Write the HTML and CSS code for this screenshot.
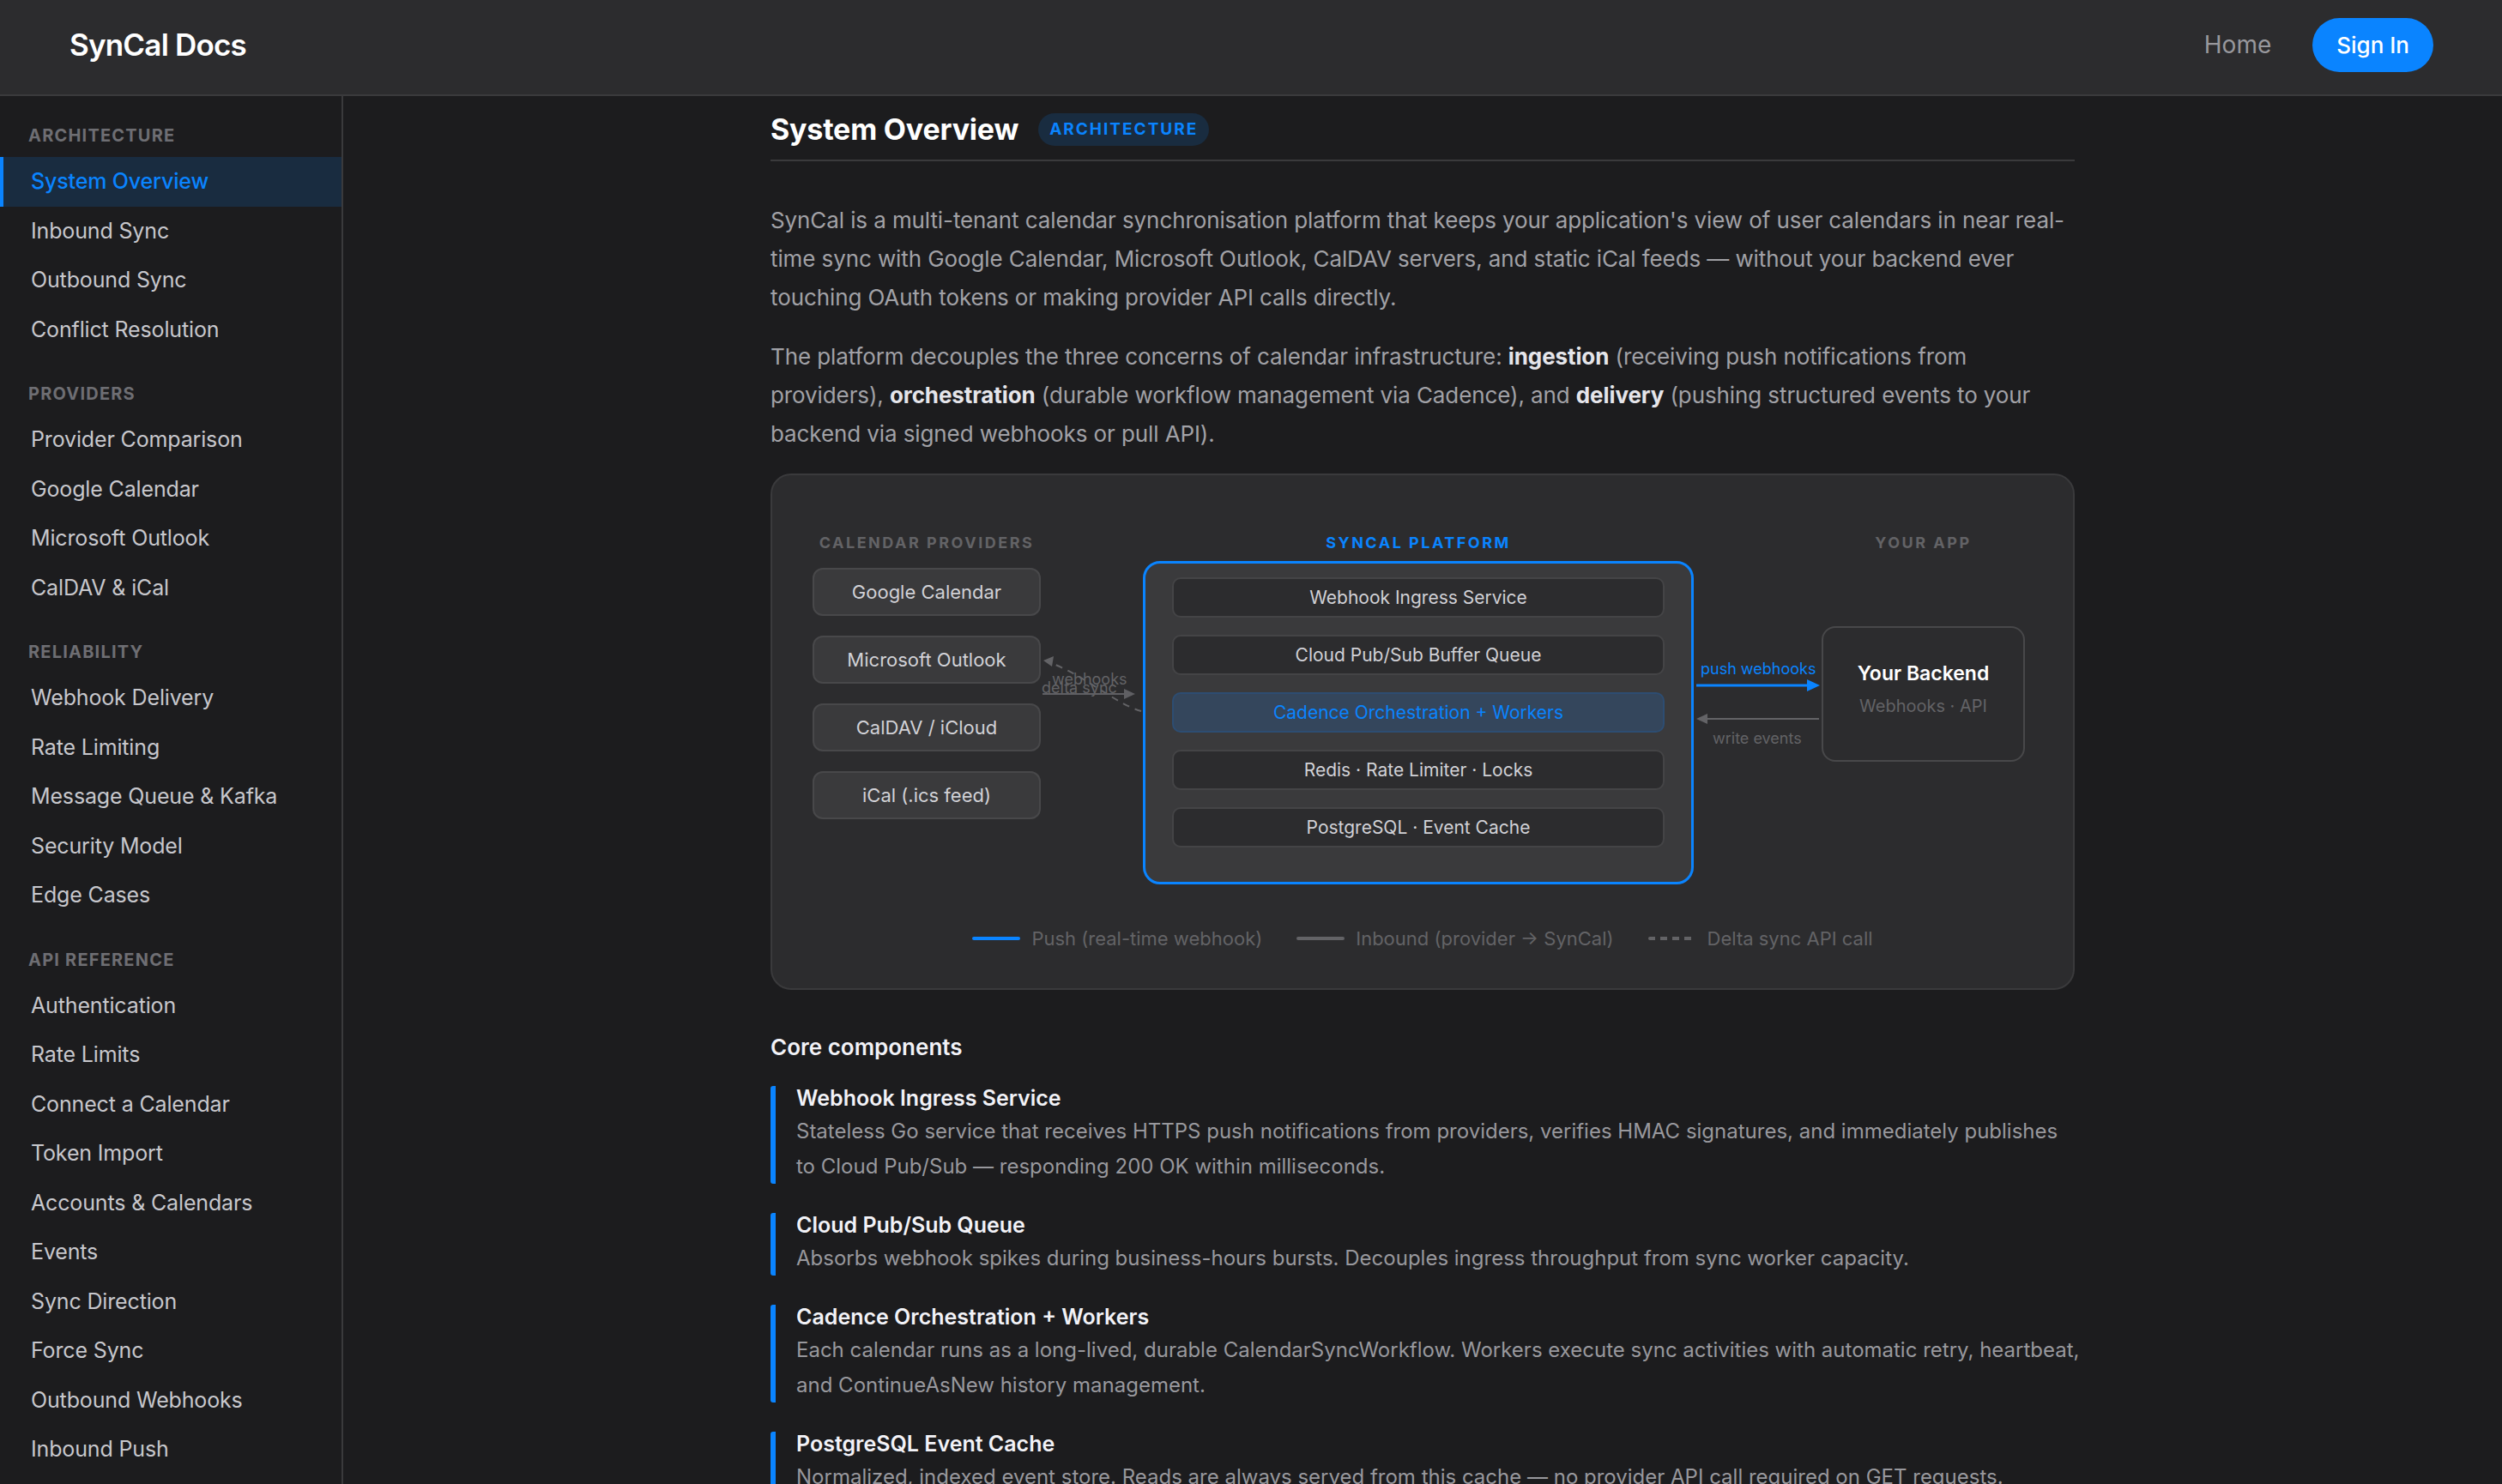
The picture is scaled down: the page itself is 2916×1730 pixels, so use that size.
FILE: index.html
```html
<!doctype html>
<html lang="en">
<head>
	<meta charset="UTF-8">
	<title>System Overview · SynCal Docs</title>
	<link rel="stylesheet" href="styles.css">
</head>
<body>
	<header class="topbar">
		<div class="brand">SynCal Docs</div>
		<nav class="top-links">
			<a class="top-link" href="#">Home</a>
			<a class="btn-signin" href="#">Sign In</a>
		</nav>
	</header>

	<div class="layout">
		<aside class="sidebar">
			<div class="nav-group">
				<div class="nav-label">Architecture</div>
				<a class="nav-item active" href="#">System Overview</a>
				<a class="nav-item" href="#">Inbound Sync</a>
				<a class="nav-item" href="#">Outbound Sync</a>
				<a class="nav-item" href="#">Conflict Resolution</a>
			</div>
			<div class="nav-group">
				<div class="nav-label">Providers</div>
				<a class="nav-item" href="#">Provider Comparison</a>
				<a class="nav-item" href="#">Google Calendar</a>
				<a class="nav-item" href="#">Microsoft Outlook</a>
				<a class="nav-item" href="#">CalDAV &amp; iCal</a>
			</div>
			<div class="nav-group">
				<div class="nav-label">Reliability</div>
				<a class="nav-item" href="#">Webhook Delivery</a>
				<a class="nav-item" href="#">Rate Limiting</a>
				<a class="nav-item" href="#">Message Queue &amp; Kafka</a>
				<a class="nav-item" href="#">Security Model</a>
				<a class="nav-item" href="#">Edge Cases</a>
			</div>
			<div class="nav-group">
				<div class="nav-label">API Reference</div>
				<a class="nav-item" href="#">Authentication</a>
				<a class="nav-item" href="#">Rate Limits</a>
				<a class="nav-item" href="#">Connect a Calendar</a>
				<a class="nav-item" href="#">Token Import</a>
				<a class="nav-item" href="#">Accounts &amp; Calendars</a>
				<a class="nav-item" href="#">Events</a>
				<a class="nav-item" href="#">Sync Direction</a>
				<a class="nav-item" href="#">Force Sync</a>
				<a class="nav-item" href="#">Outbound Webhooks</a>
				<a class="nav-item" href="#">Inbound Push</a>
			</div>
		</aside>

		<main class="main">
			<article class="doc">
				<div class="doc-head">
					<h1 class="doc-title">System Overview</h1>
					<span class="badge">Architecture</span>
				</div>

				<p class="prose">SynCal is a multi-tenant calendar synchronisation platform that keeps your application's view of user calendars in near real-time sync with Google Calendar, Microsoft Outlook, CalDAV servers, and static iCal feeds — without your backend ever touching OAuth tokens or making provider API calls directly.</p>
				<p class="prose">The platform decouples the three concerns of calendar infrastructure: <strong>ingestion</strong> (receiving push notifications from providers), <strong>orchestration</strong> (durable workflow management via Cadence), and <strong>delivery</strong> (pushing structured events to your backend via signed webhooks or pull API).</p>

				<!-- architecture diagram -->
				<div class="diagram">
					<div class="diagram-cols">
						<div class="col col-providers">
							<div class="col-label">Calendar Providers</div>
							<div class="providers">
								<div class="provider">Google Calendar</div>
								<div class="provider">Microsoft Outlook</div>
								<div class="provider">CalDAV / iCloud</div>
								<div class="provider">iCal (.ics feed)</div>
							</div>
						</div>

						<svg class="link link-in" width="119" height="420" viewBox="0 0 119 420">
							<path d="M117 207 C90 200 50 165 12 151" fill="none" stroke="#636366" stroke-width="2" stroke-dasharray="8 7"/>
							<polygon points="3,148 15,143 13,155" fill="#636366"/>
							<text x="13" y="176">webhooks</text>
							<text x="1" y="186">delta sync</text>
							<line x1="2" y1="187" x2="98" y2="187" stroke="#5f5f63" stroke-width="2"/>
							<polygon points="110,187 97,181 97,193" fill="#5f5f63"/>
						</svg>

						<div class="col col-platform">
							<div class="col-label blue">SynCal Platform</div>
							<div class="platform">
								<div class="service">Webhook Ingress Service</div>
								<div class="service">Cloud Pub/Sub Buffer Queue</div>
								<div class="service hot">Cadence Orchestration + Workers</div>
								<div class="service">Redis · Rate Limiter · Locks</div>
								<div class="service">PostgreSQL · Event Cache</div>
							</div>
						</div>

						<svg class="link link-out" width="149" height="420" viewBox="0 0 149 420">
							<text class="push" x="8" y="164">push webhooks</text>
							<line x1="3" y1="177" x2="134" y2="177" stroke="#0a84ff" stroke-width="3"/>
							<polygon points="147,177 132,170 132,184" fill="#0a84ff"/>
							<line x1="15" y1="216" x2="146" y2="216" stroke="#636366" stroke-width="2"/>
							<polygon points="3,216 16,210 16,222" fill="#636366"/>
							<text x="22" y="245">write events</text>
						</svg>

						<div class="col col-app">
							<div class="col-label">Your App</div>
							<div class="backend">
								<div class="backend-name">Your Backend</div>
								<div class="backend-sub">Webhooks · API</div>
							</div>
						</div>
					</div>

					<div class="legend">
						<div class="legend-item"><span class="swatch push"></span>Push (real-time webhook)</div>
						<div class="legend-item"><span class="swatch inbound"></span>Inbound (provider → SynCal)</div>
						<div class="legend-item"><span class="swatch delta"></span>Delta sync API call</div>
					</div>
				</div>

				<h2 class="section-title">Core components</h2>

				<div class="component">
					<h3>Webhook Ingress Service</h3>
					<p>Stateless Go service that receives HTTPS push notifications from providers, verifies HMAC signatures, and immediately publishes to Cloud Pub/Sub — responding 200 OK within milliseconds.</p>
				</div>
				<div class="component">
					<h3>Cloud Pub/Sub Queue</h3>
					<p>Absorbs webhook spikes during business-hours bursts. Decouples ingress throughput from sync worker capacity.</p>
				</div>
				<div class="component">
					<h3>Cadence Orchestration + Workers</h3>
					<p>Each calendar runs as a long-lived, durable CalendarSyncWorkflow. Workers execute sync activities with automatic retry, heartbeat, and ContinueAsNew history management.</p>
				</div>
				<div class="component">
					<h3>PostgreSQL Event Cache</h3>
					<p>Normalized, indexed event store. Reads are always served from this cache — no provider API call required on GET requests.</p>
				</div>
			</article>
		</main>
	</div>
</body>
</html>
```

FILE: styles.css
```css
*{margin:0;padding:0;box-sizing:border-box}
html,body{height:100%;overflow:hidden}
body{background:#1c1c1e;color:#f2f2f7;font-family:Inter,"Noto Sans",sans-serif}
a{color:inherit;text-decoration:none}

/* top bar */
.topbar{height:112px;display:flex;align-items:center;justify-content:space-between;padding:0 80px 6px 81px;background:#2c2c2e;border-bottom:2px solid #3a3a3c}
.brand{font-size:35px;font-weight:600;letter-spacing:-.8px;color:#fff}
.top-links{display:flex;align-items:center;gap:48px}
.top-link{font-size:28px;color:#98989d}
.btn-signin{display:flex;align-items:center;height:63px;padding:0 28px;border-radius:32px;background:#0a84ff;color:#fff;font-size:26px;font-weight:500}

.layout{display:flex;height:calc(100% - 112px)}

/* sidebar */
.sidebar{width:400px;flex:none;padding-top:34px;border-right:2px solid #3a3a3c;overflow:hidden}
.nav-group+.nav-group{margin-top:34px}
.nav-label{margin-bottom:13px;padding-left:33px;font-size:20px;line-height:24px;font-weight:700;letter-spacing:1.2px;text-transform:uppercase;color:#6e6e73}
.nav-item{display:block;padding:12px 0 12px 36px;font-size:25px;line-height:33.5px;letter-spacing:-.15px;color:#c7c7cc}
.nav-item.active{padding-left:32px;border-left:4px solid #0a84ff;background:#192c40;color:#0a84ff;font-weight:500}

/* article */
.main{flex:1;overflow:hidden}
.doc{max-width:1520px;margin:0 auto;padding-top:18px}
.doc-head{display:flex;align-items:center;gap:23px;margin-bottom:46px;padding-bottom:15px;border-bottom:2px solid #3a3a3c}
.doc-title{font-size:34px;line-height:41px;font-weight:700;letter-spacing:-.2px;color:#fff}
.badge{height:38px;padding:0 13px;border-radius:19px;background:#192c40;color:#0a84ff;font-size:19px;line-height:38px;font-weight:700;letter-spacing:2px;text-transform:uppercase}
.prose{margin-bottom:24px;font-size:26px;line-height:45px;letter-spacing:-.1px;color:#a1a1a6}
.prose strong{font-weight:700;color:#e5e5ea}

/* diagram */
.diagram{padding:68px 47px 44px;border:2px solid #3a3a3c;border-radius:24px;background:#2c2c2e}
.diagram-cols{display:flex;align-items:flex-start}
.col{flex:none}
.col-providers{width:266px}
.col-platform{width:642px}
.col-app{width:237px}
.col-label{font-size:18px;line-height:22px;font-weight:700;letter-spacing:2.5px;text-align:center;text-transform:uppercase;color:#636366}
.col-label.blue{color:#0a84ff}
.link{flex:none;overflow:visible;font-size:18px;fill:#636366}
.link .push{fill:#0a84ff}

.providers{display:flex;flex-direction:column;gap:23px;margin-top:18px}
.provider{display:flex;align-items:center;justify-content:center;height:56px;border:2px solid #48484a;border-radius:12px;background:#3a3a3c;font-size:22px;color:#d1d1d6}

.platform{display:flex;flex-direction:column;gap:20px;margin-top:10px;padding:16px 31px 40px;border:3px solid #0a84ff;border-radius:20px;background:#3a3a3c}
.service{display:flex;align-items:center;justify-content:center;height:47px;border:2px solid #444446;border-radius:10px;background:#2c2c2e;font-size:21px;color:#d1d1d6}
.service.hot{border-color:#2d4d72;background:#34465c;color:#0a84ff}

.backend{display:flex;flex-direction:column;align-items:center;justify-content:center;gap:12px;height:158px;margin-top:86px;padding-bottom:12px;border:2px solid #48484a;border-radius:16px;background:#2c2c2e}
.backend-name{font-size:23px;line-height:28px;font-weight:600;color:#fff}
.backend-sub{font-size:20px;line-height:24px;color:#636366}

.legend{display:flex;justify-content:center;gap:40px;margin-top:38px;font-size:22px;line-height:28px;color:#636366}
.legend-item{display:flex;align-items:center;gap:13px}
.swatch{width:56px;height:4px;border-radius:2px}
.swatch.push{background:#0a84ff}
.swatch.inbound{background:#636366}
.swatch.delta{background:repeating-linear-gradient(90deg,#636366 0 8px,transparent 8px 14px)}

/* components list */
.section-title{margin:51px 0 29px;font-size:26px;line-height:32px;font-weight:600;color:#f2f2f7}
.component{padding-left:24px;border-left:6px solid #0a84ff;border-radius:3px}
.component+.component{margin-top:34px}
.component h3{font-size:25px;line-height:28px;font-weight:600;color:#f2f2f7}
.component p{margin:4px -7px 0 0;font-size:24px;line-height:41px;color:#98989d}
```
